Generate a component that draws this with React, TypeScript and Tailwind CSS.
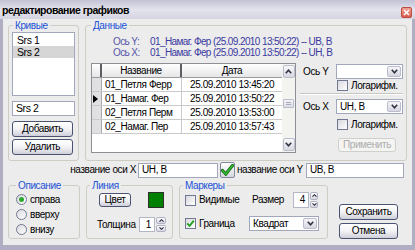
import React from "react";

type Kids = { children?: React.ReactNode; className?: string };

const Chevron = ({ up = false, color = "#2F3242" }: { up?: boolean; color?: string }) => (
  <svg width="7" height="5" viewBox="0 0 7 5">
    <path
      d={up ? "M0.8 4.2 L3.5 1.2 L6.2 4.2" : "M0.8 0.8 L3.5 3.8 L6.2 0.8"}
      stroke={color}
      strokeWidth="1.6"
      fill="none"
    />
  </svg>
);

const SmallChevron = ({ up = false }: { up?: boolean }) => (
  <svg width="5" height="3" viewBox="0 0 5 3">
    <path d={up ? "M0.5 2.7 L2.5 0.7 L4.5 2.7" : "M0.5 0.3 L2.5 2.3 L4.5 0.3"} stroke="#2F3242" strokeWidth="1.1" fill="none" />
  </svg>
);

function Group({ title, legendClass, className = "", children }: { title: string; legendClass: string } & Kids) {
  return (
    <fieldset className={"border border-[#CDCDC4] rounded-[3px] min-w-0 p-0 flex flex-col " + className}>
      <legend className={"px-[2px] text-[10px] leading-[13px] text-[#2152D4] " + legendClass}>{title}</legend>
      {children}
    </fieldset>
  );
}

function Btn({ children, className = "", disabled = false }: { disabled?: boolean } & Kids) {
  return (
    <div
      className={
        "flex items-center justify-center rounded-[3px] border " +
        (disabled
          ? "border-[#CFCFCB] bg-[#F4F4F2] text-[#ADADAD]"
          : "border-[#4A5472] bg-linear-to-b from-[#FFFFFF] via-[#F3F3F6] to-[#CFCFDA] text-black") +
        " " +
        className
      }
    >
      {children}
    </div>
  );
}

function Check({ checked = false }: { checked?: boolean }) {
  return (
    <div className="w-[11px] h-[11px] shrink-0 border border-[#727892] bg-linear-to-br from-[#D9D9DE] to-[#FFFFFF] flex items-center justify-center">
      {checked && (
        <svg width="9" height="9" viewBox="0 0 9 9">
          <path d="M1.2 4.4 L3.6 6.8 L7.8 1.6" stroke="#1FA01F" strokeWidth="1.8" fill="none" />
        </svg>
      )}
    </div>
  );
}

function Radio({ checked = false }: { checked?: boolean }) {
  return (
    <div className="w-[11px] h-[11px] shrink-0 rounded-full border border-[#727892] bg-linear-to-br from-[#D9D9DE] to-[#FFFFFF] flex items-center justify-center">
      {checked && <div className="w-[5px] h-[5px] rounded-full bg-[#2DA82D]" />}
    </div>
  );
}

function Combo({ value, className = "" }: { value: string; className?: string }) {
  return (
    <div className={"flex border border-[#A2A7BC] bg-white " + className}>
      <div className="flex-1 flex items-center pl-[3px]">{value}</div>
      <div className="w-[14px] m-[1px] rounded-[2px] border border-[#B9BDCD] bg-linear-to-b from-[#F6F6F9] to-[#D6D6E0] flex items-center justify-center">
        <Chevron />
      </div>
    </div>
  );
}

function Spin({ value, arrowsClass }: { value: string; arrowsClass: string }) {
  return (
    <div className="flex items-stretch h-full">
      <div className="w-[16px] border border-[#B2B6C6] bg-white flex items-center justify-end pr-[3px]">{value}</div>
      <div className={"flex flex-col gap-[1px] ml-[1px] " + arrowsClass}>
        <div className="flex-1 rounded-[2px] border border-[#AEB2C4] bg-linear-to-b from-[#FFFFFF] to-[#D8D8E2] flex items-center justify-center">
          <SmallChevron up />
        </div>
        <div className="flex-1 rounded-[2px] border border-[#AEB2C4] bg-linear-to-b from-[#FFFFFF] to-[#D8D8E2] flex items-center justify-center">
          <SmallChevron />
        </div>
      </div>
    </div>
  );
}

function ScrollBtn({ up = false }: { up?: boolean }) {
  return (
    <div className="h-[13px] w-[12px] mx-auto rounded-[2px] border border-[#B9BDCD] bg-linear-to-b from-[#F8F8FA] to-[#D8D8E2] flex items-center justify-center">
      <Chevron up={up} />
    </div>
  );
}

const rows = [
  { name: "01_Петля Ферр", date: "25.09.2010 13:45:20", sel: false },
  { name: "01_Намаг. Фер", date: "25.09.2010 13:50:22", sel: true },
  { name: "02_Петля Перм", date: "25.09.2010 13:53:00", sel: false },
  { name: "02_Намаг. Пер", date: "25.09.2010 13:57:43", sel: false },
];

export default function App() {
  return (
    <div className="w-[415px] h-[250px] flex flex-col overflow-hidden font-['Tahoma','Liberation_Sans',Arial,sans-serif] text-[10px] tracking-[-0.4px] leading-none text-black">
      {/* title bar */}
      <div className="h-[19px] shrink-0 flex items-start justify-between bg-linear-to-b from-[#C3C2D6] via-[#E3E3EC] to-[#D5D4E2]">
        <span className="mt-[4px] ml-[2px] text-[10.5px] font-bold tracking-[-0.5px] leading-[12px]">редактирование графиков</span>
        <div className="mt-[7px] mr-[3px] w-[11px] h-[11px] rounded-[2px] border border-[#BC4C40] bg-linear-to-b from-[#F3A294] to-[#DB5A4C] flex items-center justify-center">
          <svg width="7" height="7" viewBox="0 0 7 7">
            <path d="M1 1 L6 6 M6 1 L1 6" stroke="white" strokeWidth="1.5" />
          </svg>
        </div>
      </div>

      {/* body */}
      <div className="flex-1 flex flex-col bg-[#ECECEC] border-x-[3px] border-b-[5px] border-[#AFAEC3]">
        {/* top row */}
        <div className="flex pl-[5px] gap-[6px]">
          <Group title="Кривые" legendClass="ml-[4px]" className="w-[71px] h-[142px]">
            <div className="flex flex-col px-[3px]">
              <div className="h-[64px] border border-[#A2A7BC] bg-white pt-[1px] text-[10.5px]">
                <div className="h-[12px] flex items-center pl-[4px]">Srs 1</div>
                <div className="h-[12px] flex items-center pl-[4px] bg-[#D6D6D6]">Srs 2</div>
              </div>
              <div className="mt-[5px] h-[15px] border border-[#A2A7BC] bg-white flex items-center pl-[3px] text-[10.5px]">Srs 2</div>
              <Btn className="mt-[5px] h-[16px] w-[61px]">Добавить</Btn>
              <Btn className="mt-[2px] h-[16px] w-[61px]">Удалить</Btn>
            </div>
          </Group>

          <Group title="Данные" legendClass="ml-[5px]" className="w-[322px] h-[142px]">
            <div className="flex flex-col pl-[5px]">
              <div className="mt-[4px] ml-[22px] grid grid-cols-[37px_auto] text-[#3A3AA0] tracking-[-0.6px]">
                <div className="h-[11px] flex items-center text-[#5656A8]">Ось Y:</div>
                <div className="h-[11px] flex items-center">01_Намаг. Фер (25.09.2010 13:50:22) -- UB, B</div>
                <div className="h-[11px] flex items-center text-[#5656A8]">Ось X:</div>
                <div className="h-[11px] flex items-center">01_Намаг. Фер (25.09.2010 13:50:22) -- UH, B</div>
              </div>
              <div className="mt-[5px] flex">
                {/* table */}
                <div className="w-[205px] h-[90px] border border-[#8E8F94] bg-white flex">
                  <div className="flex-1 flex flex-col">
                    <div className="h-[14px] flex bg-linear-to-b from-[#FFFFFF] to-[#E6E6E8] border-b border-[#9A9A9A]">
                      <div className="w-[10px] border-r-[2px] border-[#5E5E62]" />
                      <div className="w-[80px] border-r-[2px] border-[#5E5E62] flex items-center justify-center">Название</div>
                      <div className="flex-1 flex items-center justify-center">Дата</div>
                    </div>
                    {rows.map((r) => (
                      <div key={r.name} className="h-[14px] flex border-b border-[#CACACA]">
                        <div className="w-[10px] bg-[#E0E0E2] border-r border-[#A9A9AE] flex items-center pl-[1px]">
                          {r.sel && (
                            <svg width="5" height="8" viewBox="0 0 5 8">
                              <path d="M0 0 L5 4 L0 8 Z" fill="#000" />
                            </svg>
                          )}
                        </div>
                        <div className="w-[80px] border-r border-[#CACACA] flex items-center pl-[3px]">{r.name}</div>
                        <div className="flex-1 flex items-center pl-[8px]">{r.date}</div>
                      </div>
                    ))}
                  </div>
                  {/* scrollbar */}
                  <div className="w-[13px] flex flex-col bg-[#F3F3EF] py-[1px]">
                    <ScrollBtn up />
                    <div className="h-[21px]" />
                    <div className="h-[9px] w-[11px] mx-auto rounded-[1px] border border-[#B9BDCD] bg-linear-to-b from-[#F4F4F7] to-[#DCDCE4] flex flex-col items-center justify-center gap-[1px]">
                      <div className="w-[5px] h-px bg-[#A8ACBC]" />
                      <div className="w-[5px] h-px bg-[#A8ACBC]" />
                    </div>
                    <div className="flex-1" />
                    <ScrollBtn />
                  </div>
                </div>

                {/* right panel */}
                <div className="ml-[4px] w-[103px] flex flex-col pt-[1px]">
                  <div className="flex items-center h-[15px]">
                    <div className="w-[36px] pl-[3px]">Ось Y</div>
                    <Combo value="" className="w-[67px] h-[15px]" />
                  </div>
                  <div className="mt-[1px] ml-[37px] h-[11px] flex items-center gap-[3px]">
                    <Check />
                    <span>Логарифм.</span>
                  </div>
                  <div className="mt-[2px] h-[2px] border-t border-[#C6C6C2] border-b border-b-[#FFFFFF]" />
                  <div className="mt-[4px] flex items-center h-[15px]">
                    <div className="w-[36px] pl-[3px]">Ось X</div>
                    <Combo value="UH, B" className="w-[67px] h-[15px]" />
                  </div>
                  <div className="mt-[5px] ml-[37px] h-[11px] flex items-center gap-[3px]">
                    <Check />
                    <span>Логарифм.</span>
                  </div>
                  <Btn disabled className="mt-[8px] ml-[38px] h-[14px] w-[58px]">Применить</Btn>
                </div>
              </div>
            </div>
          </Group>
        </div>

        {/* axis names row */}
        <div className="mt-[1px] h-[16px] flex items-center pl-[67px]">
          <div className="w-[66px] text-right">название оси X</div>
          <div className="ml-[2px] w-[80px] h-[15px] border border-[#A2A7BC] bg-white flex items-center pl-[3px]">UH, B</div>
          <div className="ml-[2px] w-[15px] h-[16px] rounded-[2px] border border-[#80869C] bg-linear-to-b from-[#FFFFFF] to-[#D7D7DF] flex items-center justify-center">
            <svg width="13" height="12" viewBox="0 0 13 12">
              <path d="M1.5 6.5 L4.8 10 L11.5 1.5" stroke="#0F6E0F" strokeWidth="3.2" fill="none" strokeLinecap="round" />
              <path d="M1.5 6.5 L4.8 10 L11.5 1.5" stroke="#37B537" strokeWidth="1.6" fill="none" strokeLinecap="round" />
            </svg>
          </div>
          <div className="ml-[2px] w-[68px]">название оси Y</div>
          <div className="ml-[1px] w-[98px] h-[15px] border border-[#A2A7BC] bg-white flex items-center pl-[3px]">UB, B</div>
        </div>

        {/* bottom row */}
        <div className="mt-[1px] flex pl-[5px]">
          <Group title="Описание" legendClass="ml-[7px]" className="w-[72px] h-[60px]">
            <div className="flex flex-col pl-[7px]">
              {["справа", "вверху", "внизу"].map((t, i) => (
                <div key={t} className="h-[15px] flex items-center gap-[3px]">
                  <Radio checked={i === 0} />
                  <span>{t}</span>
                </div>
              ))}
            </div>
          </Group>

          <Group title="Линия" legendClass="ml-[3px]" className="ml-[6px] w-[87px] h-[60px]">
            <div className="flex flex-col">
              <div className="h-[16px] flex items-center pl-[12px]">
                <Btn className="w-[32px] h-[14px]">Цвет</Btn>
                <div className="ml-[17px] w-[16px] h-[16px] border border-[#2E2E2E] bg-[#008000]" />
              </div>
              <div className="mt-[9px] h-[15px] flex items-center pl-[10px]">
                <span className="w-[42px]">Толщина</span>
                <Spin value="1" arrowsClass="w-[10px]" />
              </div>
            </div>
          </Group>

          <Group title="Маркеры" legendClass="ml-[3px]" className="ml-[6px] w-[149px] h-[60px]">
            <div className="flex flex-col pl-[5px]">
              <div className="h-[16px] flex items-center">
                <div className="w-[64px] flex items-center gap-[3px]">
                  <Check />
                  <span>Видимые</span>
                </div>
                <span className="ml-[3px] w-[41px]">Размер</span>
                <Spin value="4" arrowsClass="w-[8px]" />
              </div>
              <div className="mt-[8px] h-[15px] flex items-center">
                <div className="w-[64px] flex items-center gap-[3px]">
                  <Check checked />
                  <span>Граница</span>
                </div>
                <Combo value="Квадрат" className="w-[70px] h-[15px]" />
              </div>
            </div>
          </Group>

          <div className="ml-[11px] flex flex-col pt-[25px]">
            <Btn className="w-[59px] h-[16px]">Сохранить</Btn>
            <Btn className="mt-[3px] w-[59px] h-[16px]">Отмена</Btn>
          </div>
        </div>
      </div>
    </div>
  );
}
